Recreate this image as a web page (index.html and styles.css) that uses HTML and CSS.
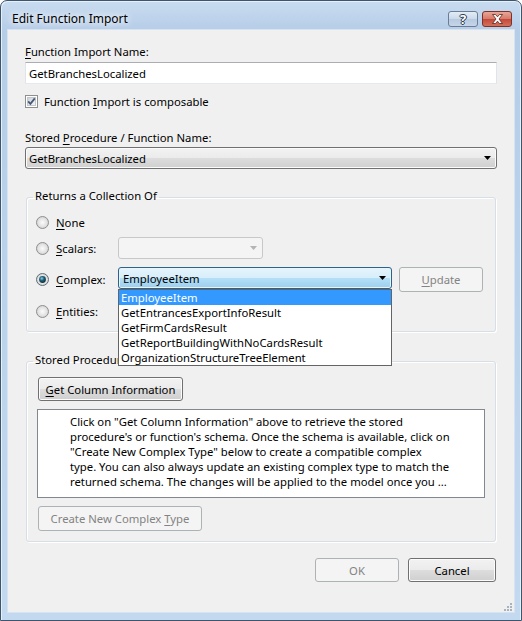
FILE: index.html
```html
<!DOCTYPE html>
<html lang="en">
<head>
    <meta charset="UTF-8">
    <title>Edit Function Import</title>
    <link rel="stylesheet" href="styles.css">
</head>
<body>
    <!-- shared gradients for the radio buttons and checkbox -->
    <svg class="defs" width="0" height="0" aria-hidden="true">
        <defs>
            <radialGradient id="radioFill" cx="50%" cy="50%" r="60%">
                <stop offset="0" stop-color="#fbfbfb"/>
                <stop offset="0.55" stop-color="#e4e4e4"/>
                <stop offset="1" stop-color="#c8c8c8"/>
            </radialGradient>
            <radialGradient id="radioDot" cx="40%" cy="35%" r="70%">
                <stop offset="0" stop-color="#8fd0e6"/>
                <stop offset="0.45" stop-color="#1f5f78"/>
                <stop offset="1" stop-color="#0c2a38"/>
            </radialGradient>
            <linearGradient id="checkFill" x1="0" y1="0" x2="1" y2="1">
                <stop offset="0" stop-color="#cbcfd5"/>
                <stop offset="1" stop-color="#f7f7f7"/>
            </linearGradient>
        </defs>
    </svg>

    <div class="window">
        <div class="titlebar">
            <span class="title">Edit Function Import</span>
            <div class="caption">
                <span class="cap-btn help">?</span>
                <span class="cap-btn close">
                    <svg width="13" height="10" viewBox="0 0 13 10">
                        <path d="M1.5 0.5h3l2 2.3 2-2.3h3l-3.5 4.5 3.5 4.5h-3l-2-2.3-2 2.3h-3l3.5-4.5z" fill="#fff" stroke="#5b231b" stroke-width="0.8"/>
                    </svg>
                </span>
            </div>
        </div>

        <div class="client">
            <div class="label"><u>F</u>unction Import Name:</div>
            <div class="textbox">GetBranchesLocalized</div>

            <div class="check-row">
                <svg class="checkbox" width="13" height="13" viewBox="0 0 13 13">
                    <rect x="0.5" y="0.5" width="12" height="12" fill="#fff" stroke="#8e8f8f"/>
                    <rect x="2.5" y="2.5" width="8" height="8" fill="url(#checkFill)" stroke="#c3c6cb"/>
                    <path d="M3.2 6.4l2.2 2.4 4.4-5.4" fill="none" stroke="#44597a" stroke-width="1.8"/>
                </svg>
                <span>Function <u>I</u>mport is composable</span>
            </div>

            <div class="label label-gap">Stored <u>P</u>rocedure / Function Name:</div>
            <div class="combo combo-wide">
                <span>GetBranchesLocalized</span>
                <svg class="arrow" width="7" height="4" viewBox="0 0 7 4"><path d="M0 0h7l-3.5 4z"/></svg>
            </div>

            <fieldset class="group">
                <legend>Returns a Collection Of</legend>
                <div class="group-body returns">
                    <div class="option-row row-none">
                        <svg class="radio" width="13" height="13" viewBox="0 0 13 13"><circle cx="6.5" cy="6.5" r="6" fill="url(#radioFill)" stroke="#8e8f8f"/></svg>
                        <span class="option-label"><u>N</u>one</span>
                    </div>
                    <div class="option-row row-scalars">
                        <svg class="radio" width="13" height="13" viewBox="0 0 13 13"><circle cx="6.5" cy="6.5" r="6" fill="url(#radioFill)" stroke="#8e8f8f"/></svg>
                        <span class="option-label"><u>S</u>calars:</span>
                        <div class="combo combo-disabled combo-scalars">
                            <span></span>
                            <svg class="arrow" width="7" height="4" viewBox="0 0 7 4"><path d="M0 0h7l-3.5 4z"/></svg>
                        </div>
                    </div>
                    <div class="option-row row-complex">
                        <svg class="radio" width="13" height="13" viewBox="0 0 13 13">
                            <circle cx="6.5" cy="6.5" r="6" fill="url(#radioFill)" stroke="#5d6e7a"/>
                            <circle cx="6.5" cy="6.5" r="3.4" fill="url(#radioDot)"/>
                        </svg>
                        <span class="option-label"><u>C</u>omplex:</span>
                        <div class="combo-wrap">
                            <div class="combo combo-open">
                                <span>EmployeeItem</span>
                                <svg class="arrow" width="7" height="4" viewBox="0 0 7 4"><path d="M0 0h7l-3.5 4z"/></svg>
                            </div>
                            <ul class="droplist">
                                <li class="selected">EmployeeItem</li>
                                <li>GetEntrancesExportInfoResult</li>
                                <li>GetFirmCardsResult</li>
                                <li>GetReportBuildingWithNoCardsResult</li>
                                <li>OrganizationStructureTreeElement</li>
                            </ul>
                        </div>
                        <button class="btn btn-update" disabled><u>U</u>pdate</button>
                    </div>
                    <div class="option-row row-entities">
                        <svg class="radio" width="13" height="13" viewBox="0 0 13 13"><circle cx="6.5" cy="6.5" r="6" fill="url(#radioFill)" stroke="#8e8f8f"/></svg>
                        <span class="option-label"><u>E</u>ntities:</span>
                    </div>
                </div>
            </fieldset>

            <fieldset class="group group-columns">
                <legend>Stored Procedure Column Information</legend>
                <div class="group-body columns">
                    <button class="btn btn-getcols"><u>G</u>et Column Information</button>
                    <div class="info">
                        Click on "Get Column Information" above to retrieve the stored<br>
                        procedure's or function's schema. Once the schema is available, click on<br>
                        "Create New Complex Type" below to create a compatible complex<br>
                        type. You can also always update an existing complex type to match the<br>
                        returned schema. The changes will be applied to the model once you ...
                    </div>
                    <button class="btn btn-create" disabled>Create New Complex <u>T</u>ype</button>
                </div>
            </fieldset>

            <div class="footer">
                <button class="btn btn-ok" disabled>OK</button>
                <button class="btn btn-cancel">Cancel</button>
            </div>

            <svg class="grip" width="9" height="9" viewBox="0 0 9 9">
                <g fill="#a9b3bf">
                    <rect x="7" y="1" width="2" height="2"/>
                    <rect x="4" y="4" width="2" height="2"/>
                    <rect x="7" y="4" width="2" height="2"/>
                    <rect x="1" y="7" width="2" height="2"/>
                    <rect x="4" y="7" width="2" height="2"/>
                    <rect x="7" y="7" width="2" height="2"/>
                </g>
            </svg>
        </div>
    </div>
</body>
</html>
```

FILE: styles.css
```css
body {
    margin: 0;
    font-family: "Noto Sans", "Open Sans", sans-serif;
    font-size: 11.3px;
    line-height: 15px;
    color: #000;
    background: #fff;
}
u {
    text-decoration-thickness: 1px;
    text-underline-offset: 2px;
}
.defs {
    position: absolute;
}

/* window frame */
.window {
    box-sizing: border-box;
    width: 522px;
    height: 621px;
    display: flex;
    flex-direction: column;
    padding: 0 7px 8px;
    border: 1px solid #3f546d;
    border-radius: 7px 7px 0 0;
    background: linear-gradient(180deg, #c9dcf0 0, #b6cde8 29px, #bdd4ed 60%, #c3d9f0 100%);
    box-shadow: inset 1px 1px 0 #e6f0fa, inset -1px 0 0 #e6f0fa;
}
.titlebar {
    height: 29px;
    display: flex;
    justify-content: space-between;
    align-items: flex-start;
    padding: 0 2px 0 4px;
}
.title {
    padding-top: 10px;
    font-size: 12px;
    text-shadow: 0 0 6px #fff, 0 0 10px #fff;
}
.caption {
    display: flex;
    gap: 4px;
    margin-top: 10px;
}
.cap-btn {
    box-sizing: border-box;
    width: 30px;
    height: 16px;
    display: flex;
    align-items: center;
    justify-content: center;
    border: 1px solid #6b7d94;
    border-radius: 3px;
}
.help {
    background: linear-gradient(180deg, #e3ecf6 0, #cad9ea 50%, #b7c9de 51%, #c5d6ea 100%);
    color: #fff;
    font-weight: bold;
    font-size: 13px;
    text-shadow: 0 0 1px #2e3d52, 1px 0 0 #2e3d52, -1px 0 0 #2e3d52, 0 1px 0 #2e3d52, 0 -1px 0 #2e3d52;
}
.close {
    border-color: #7d3128;
    background: linear-gradient(180deg, #e8a696 0, #d7796a 50%, #c4483a 51%, #d2715c 100%);
}

/* client area */
.client {
    position: relative;
    flex: 1;
    background: #f0f0f0;
    padding: 14px 17px 0;
    box-shadow: 0 0 0 1px #d6e3f1;
}
.label {
    height: 15px;
}
.label-gap {
    margin-top: 21px;
}
.textbox {
    box-sizing: border-box;
    height: 22px;
    margin-top: 3px;
    padding: 3px 3px 0;
    background: #fff;
    border: 1px solid #e2e3ea;
    border-top-color: #abadb3;
    border-bottom-color: #e3e9ef;
}
.check-row {
    display: flex;
    align-items: center;
    gap: 6px;
    height: 15px;
    margin-top: 10px;
}
.checkbox {
    flex: none;
}

/* combo boxes */
.combo {
    box-sizing: border-box;
    height: 22px;
    display: flex;
    align-items: center;
    justify-content: space-between;
    padding: 0 5px 0 3px;
    border: 1px solid #707070;
    border-radius: 3px;
    background: linear-gradient(180deg, #f2f2f2 0, #ebebeb 50%, #dddddd 51%, #cfcfcf 100%);
    box-shadow: inset 0 0 0 1px #fbfbfb;
}
.combo-wide {
    margin-top: 2px;
}
.combo-disabled {
    border-color: #c6c9cc;
    background: #f4f4f4;
    box-shadow: none;
}
.combo-disabled .arrow {
    fill: #b4b4b4;
}
.combo-scalars {
    width: 145px;
}
.combo-open {
    width: 274px;
    padding-left: 4px;
    border-color: #2c628b;
    background: linear-gradient(180deg, #e5f4fc 0, #d6eefb 50%, #b5dff7 51%, #9ccfee 100%);
    box-shadow: inset 0 0 0 1px #e6f4fc;
}
.arrow {
    flex: none;
}

/* group boxes */
.group {
    margin: 19px 1px 0;
    padding: 0;
    min-width: 0;
    border: 1px solid #d5dfe5;
    border-radius: 3px;
    box-shadow: inset 1px 1px 0 #fff, 1px 1px 0 #fff;
}
.group legend {
    margin-left: 6px;
    padding: 0 2px 4px;
    line-height: 15px;
}
.group-columns {
    margin-top: 20px;
}
.returns {
    padding: 5px 0 10px 9px;
}
.option-row {
    display: flex;
    align-items: center;
}
.radio {
    flex: none;
    margin-right: 7px;
}
.option-label {
    width: 62px;
}
.row-none {
    height: 20px;
}
.row-scalars {
    height: 22px;
    margin-top: 5px;
}
.row-complex {
    height: 25px;
    margin-top: 8px;
}
.row-entities {
    height: 20px;
    margin-top: 9px;
}
.combo-wrap {
    position: relative;
    align-self: flex-start;
}
.droplist {
    position: absolute;
    left: 0;
    top: 22px;
    z-index: 2;
    box-sizing: border-box;
    width: 274px;
    margin: 0;
    padding: 0;
    list-style: none;
    background: #fff;
    border: 1px solid #646464;
}
.droplist li {
    height: 15px;
    padding-left: 2px;
}
.droplist .selected {
    background: #3399ff;
    color: #fff;
}

/* buttons */
.btn {
    box-sizing: border-box;
    height: 24px;
    padding: 0;
    font: inherit;
    color: #000;
    border: 1px solid #707070;
    border-radius: 3px;
    background: linear-gradient(180deg, #f2f2f2 0, #ebebeb 50%, #dddddd 51%, #cfcfcf 100%);
    box-shadow: inset 0 0 0 1px #fcfcfc;
}
.btn:disabled {
    color: #838383;
    border-color: #adb2b5;
    background: #f4f4f4;
    box-shadow: none;
}
.btn-update {
    width: 84px;
    height: 25px;
    margin-left: 7px;
}
.columns {
    padding: 6px 0 10px 11px;
}
.btn-getcols {
    display: block;
    width: 145px;
}
.info {
    box-sizing: border-box;
    width: 448px;
    height: 89px;
    margin: 8px 0 0 -1px;
    padding: 4px 0 0 32px;
    white-space: nowrap;
    background: #fff;
    border: 1px solid #828790;
}
.btn-create {
    display: block;
    width: 164px;
    height: 25px;
    margin-top: 8px;
}
.footer {
    display: flex;
    justify-content: flex-end;
    gap: 9px;
    margin: 16px 1px 0 0;
}
.btn-ok {
    width: 84px;
}
.btn-cancel {
    width: 88px;
}
.grip {
    position: absolute;
    right: 2px;
    bottom: 1px;
}
```
